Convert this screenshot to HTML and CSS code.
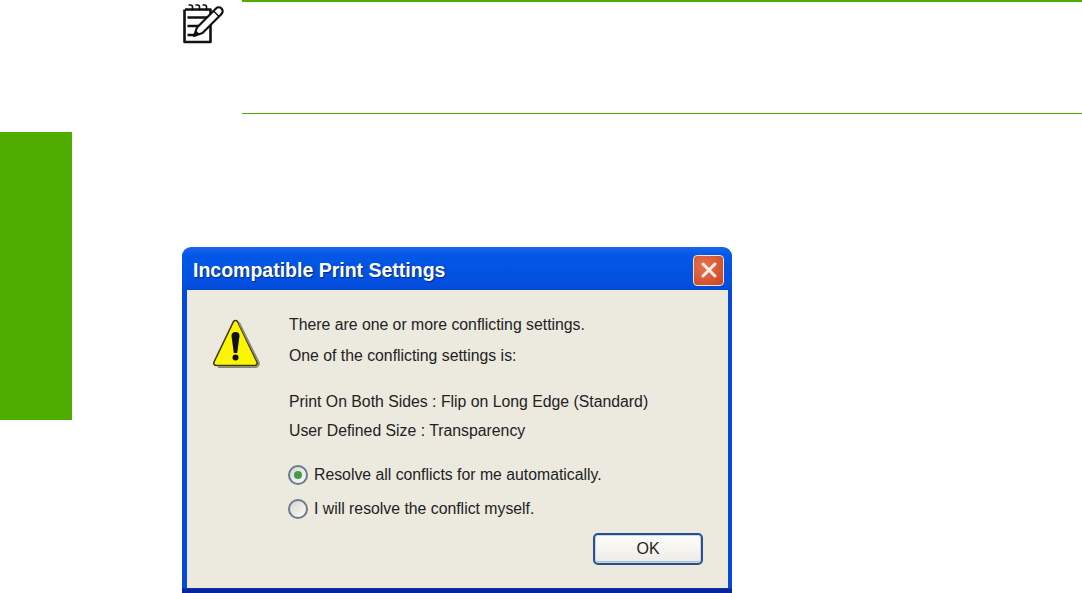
FILE: index.html
```html
<!DOCTYPE html>
<html lang="en">
  <head>
    <meta charset="UTF-8" />
    <title>Incompatible Print Settings</title>
    <link rel="stylesheet" href="styles.css">
  </head>
  <body>
    <div class="page">
      <div class="side">
        <div class="side-tab"></div>
      </div>
      <div class="main">
        <div class="note">
          <div class="note-icon">
            <svg width="42" height="46" viewBox="0 0 42 46">
              <path d="M3 9.500H28.500V42H2.500V9.500" fill="#fff" stroke="#111" stroke-width="2.600" stroke-linejoin="round"/>
              <path d="M6.500 5h2a2 2 0 0 1 2 2v3.500M13.500 5h2a2 2 0 0 1 2 2v3.500M20.500 5h2a2 2 0 0 1 2 2v3.500" fill="none" stroke="#111" stroke-width="1.600"/>
              <path d="M5.500 17.500H26M5.500 26H22M5.500 35H12" stroke="#111" stroke-width="2.600"/>
              <path d="M12 36L15 27.500L34 8.500A3.500 3.500 0 0 1 39.500 14L20.500 33Z" fill="#fff" stroke="#111" stroke-width="2.200" stroke-linejoin="round"/>
              <path d="M12 36L13.800 30.500L17.800 34Z" fill="#111"/>
              <path d="M31.500 11L37 16.500" stroke="#111" stroke-width="1.400"/>
            </svg>
          </div>
          <div class="note-body"></div>
        </div>
        <div class="dialog">
          <div class="title-bar">
            <span class="title-text">Incompatible Print Settings</span>
            <span class="close-btn">
              <svg width="18" height="18" viewBox="0 0 18 18">
                <path d="M3 3L15 15M15 3L3 15" stroke="#fbeee8" stroke-width="3" stroke-linecap="round"/>
              </svg>
            </span>
          </div>
          <div class="dialog-body">
            <div class="warn-icon">
              <svg width="48" height="52" viewBox="0 0 48 52">
                <path d="M21.500 4.500a2.500 2.500 0 0 1 4 0L45 45a2.500 2.500 0 0 1 -2.500 3.500H4.500A2.500 2.500 0 0 1 2 45Z" fill="#fbf402" stroke="#3d3a1c" stroke-width="1.600" stroke-linejoin="round"/>
                <path d="M27 5.500L46.500 45a3.500 3.500 0 0 1 -3.500 5H6" fill="none" stroke="#8d8a72" stroke-width="1.800"/>
                <path d="M19.500 19a4 4 0 0 1 8 0L25.200 36h-3.400Z" fill="#111"/>
                <circle cx="23.500" cy="40.500" r="3" fill="#111"/>
              </svg>
            </div>
            <div class="dialog-content">
              <p class="msg">There are one or more conflicting settings.</p>
              <p class="msg msg-second">One of the conflicting settings is:</p>
              <p class="msg msg-group">Print On Both Sides : Flip on Long Edge (Standard)</p>
              <p class="msg msg-fourth">User Defined Size : Transparency</p>
              <div class="radios">
                <div class="radio-row">
                  <span class="radio radio-on"><span class="radio-dot"></span></span>
                  <span>Resolve all conflicts for me automatically.</span>
                </div>
                <div class="radio-row">
                  <span class="radio"></span>
                  <span>I will resolve the conflict myself.</span>
                </div>
              </div>
              <div class="actions">
                <button class="ok-btn" type="button">OK</button>
              </div>
            </div>
          </div>
        </div>
      </div>
    </div>
  </body>
</html>
```

FILE: styles.css
```css
/* Global Styles */
html,
body {
  margin: 0;
  height: 593px;
  overflow: hidden;
  background: #fff;
  font-family: "Liberation Sans", Arial, sans-serif;
}

.page {
  display: flex;
  height: 593px;
}

.side {
  width: 72px;
  flex-shrink: 0;
  padding-top: 132px;
}

.side-tab {
  height: 288px;
  background: #4fad00;
}

.main {
  flex: 1;
  padding-left: 110px;
}

/* Note block */
.note {
  display: flex;
  height: 114px;
}

.note-icon {
  width: 60px;
  flex-shrink: 0;
}

.note-icon svg {
  display: block;
}

.note-body {
  flex: 1;
  border-top: 2px solid #4fad00;
  border-bottom: 1px solid #4fad00;
}

/* Dialog */
.dialog {
  width: 550px;
  height: 346px;
  margin-top: 133px;
  display: flex;
  flex-direction: column;
  box-sizing: border-box;
  border-radius: 9px 9px 0 0;
  background: linear-gradient(#1a66ea, #0358e6 8px, #0350e0 35px, #0648d8 43px, #0648d8 calc(100% - 5px), #08249a calc(100% - 4px));
  padding: 0 4px 5px 5px;
}

.title-bar {
  height: 43px;
  box-sizing: border-box;
  flex-shrink: 0;
  display: flex;
  align-items: center;
  justify-content: space-between;
  padding: 3px 4px 0 6px;
}

.title-text {
  color: #fff;
  font-size: 19.500px;
  font-weight: bold;
  text-shadow: 1px 1px 1px #0a2a80;
}

.close-btn {
  width: 31px;
  height: 31px;
  box-sizing: border-box;
  display: flex;
  align-items: center;
  justify-content: center;
  border: 1px solid #e8e4e0;
  border-radius: 4px;
  background: radial-gradient(circle at 35% 35%, #e8734f, #c9431f);
}

.dialog-body {
  flex: 1;
  display: flex;
  background: #ece9df;
  padding: 27px 25px 0 25px;
}

.warn-icon {
  width: 77px;
  flex-shrink: 0;
}

.warn-icon svg {
  display: block;
}

.dialog-content {
  flex: 1;
  color: #222;
  font-size: 15.800px;
}

.msg {
  margin: 0;
  line-height: 16px;
  white-space: nowrap;
}

.msg-second {
  margin-top: 15px;
}

.msg-group {
  margin-top: 30px;
}

.msg-fourth {
  margin-top: 13px;
}

.radios {
  margin: 26px 0 0 -1px;
}

.radio-row {
  display: flex;
  align-items: center;
  gap: 6px;
  height: 20px;
  margin-bottom: 14px;
}

.radio {
  width: 20px;
  height: 20px;
  box-sizing: border-box;
  display: flex;
  align-items: center;
  justify-content: center;
  border: 2px solid #6b7a8c;
  border-radius: 50%;
  background: linear-gradient(135deg, #d8d6d0, #fbfbf8);
}

.radio-dot {
  width: 8px;
  height: 8px;
  border-radius: 50%;
  background: #3f9e4a;
}

.actions {
  display: flex;
  justify-content: flex-end;
  margin-top: 4px;
}

.ok-btn {
  width: 110px;
  height: 32px;
  font-family: inherit;
  font-size: 16px;
  color: #222;
  border: 2px solid #2d4f86;
  border-radius: 5px;
  background: linear-gradient(#fdfdfb, #ecebe4);
  box-shadow: inset 0 0 0 1px #c4d6ee, inset 0 -2px 0 #a9bfe0;
}
```
